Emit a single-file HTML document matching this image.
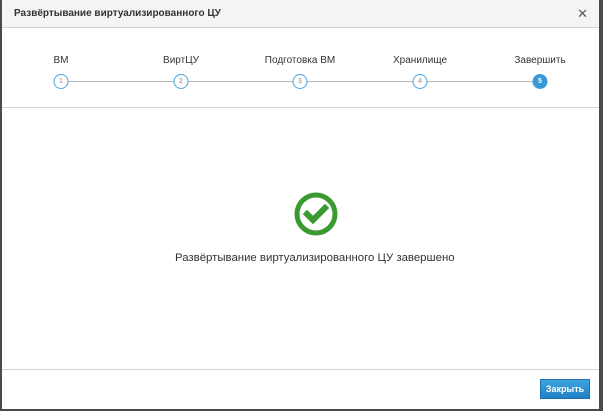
<!DOCTYPE html>
<html><head><meta charset="utf-8"><style>
*{margin:0;padding:0;box-sizing:border-box}
body{width:603px;height:411px;background:#4a4a4a;font-family:"Liberation Sans","Noto Sans CJK SC",sans-serif;position:relative;overflow:hidden}
.dlg{position:absolute;left:2px;top:0;width:597px;height:409px;background:#fff}
.hdr{position:absolute;left:0;top:0;width:100%;height:28px;background:#f4f4f4;border-bottom:1px solid #d4d4d4}
.hdr .t{position:absolute;left:12px;top:8px;font-size:10px;font-weight:bold;color:#333}
.hdr .x{position:absolute;right:11px;top:6px;font-size:13px;color:#555}
.lbl{position:absolute;top:55px;font-size:10px;color:#333;transform:translateX(-50%);white-space:nowrap}
.line{position:absolute;top:81px;left:59px;width:480px;height:1px;background:#bbb}
.c{position:absolute;top:74px;width:15px;height:15px;border-radius:50%;border:1.5px solid #4aa3dc;background:#fff;font-size:7px;color:#aaa;font-weight:bold;transform:translateX(-50%);display:flex;align-items:center;justify-content:center}
.c.a{background:#3a9ad9;border-color:#3a9ad9;color:#fff}
.sep{position:absolute;left:0;width:100%;height:1px;background:#d4d4d4}
.msg{position:absolute;top:252px;left:173px;font-size:11.4px;color:#333;white-space:nowrap}
.btn{position:absolute;left:538px;top:379px;width:50px;height:20px;background:linear-gradient(#3fa3e0,#1f82c6);border:1px solid #1a73b0;color:#fff;font-size:9px;font-weight:bold;text-align:center;line-height:18px}
</style></head><body>
<div class="dlg">
<div class="hdr"><div class="t">Развёртывание виртуализированного ЦУ</div><div class="x">✕</div></div>
<div class="lbl" style="left:59px">ВМ</div>
<div class="lbl" style="left:179px">ВиртЦУ</div>
<div class="lbl" style="left:298px">Подготовка ВМ</div>
<div class="lbl" style="left:418px">Хранилище</div>
<div class="lbl" style="left:538px">Завершить</div>
<div class="line"></div>
<div class="c" style="left:59px">1</div>
<div class="c" style="left:179px">2</div>
<div class="c" style="left:298px">3</div>
<div class="c" style="left:418px">4</div>
<div class="c a" style="left:538px">5</div>
<div class="sep" style="top:107px"></div>
<svg style="position:absolute;left:291px;top:191px" width="46" height="46" viewBox="0 0 46 46">
<circle cx="23" cy="23" r="19" fill="none" stroke="#3a9a2f" stroke-width="5"/>
<path d="M14 23 L20 29 L32 17" fill="none" stroke="#3a9a2f" stroke-width="6" stroke-linecap="square"/>
</svg>
<div class="msg">Развёртывание виртуализированного ЦУ завершено</div>
<div class="sep" style="top:369px"></div>
<div class="btn">Закрыть</div>
</div>
</body></html>
